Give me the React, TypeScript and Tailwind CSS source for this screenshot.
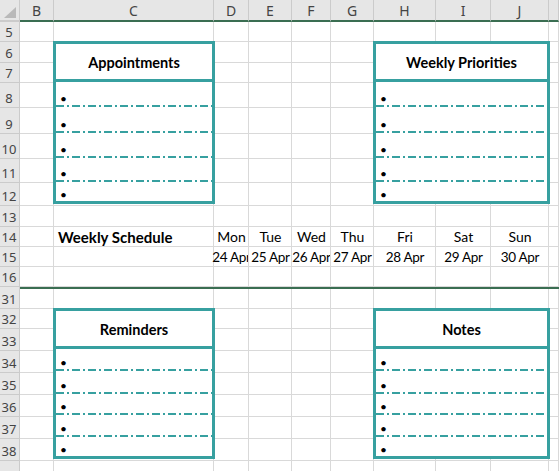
import React from "react";

const colsTpl =
  "grid-cols-[20px_34px_160px_35px_43px_39px_43px_62px_55px_58px_10px]";
const rowsTpl =
  "grid-rows-[22px_20px_21px_20px_25px_26px_25px_24px_23px_21px_20px_20px_20px_2px_20px_20px_22px_22px_22px_22px_22px_22px_22px]";

const letters = ["B", "C", "D", "E", "F", "G", "H", "I", "J", ""];
const topRows = [5, 6, 7, 8, 9, 10, 11, 12, 13, 14, 15, 16];
const bottomRows = [31, 32, 33, 34, 35, 36, 37, 38];

const dash =
  "h-[2px] bg-[repeating-linear-gradient(90deg,#37a0a0_0_8px,transparent_8px_11px,#37a0a0_11px_13px,transparent_13px_16px)]";

const RowHead = ({ n }: { n?: number }) => (
  <div className="bg-[#e6e6e6] border-r border-b border-[#cbcbcb] flex items-end justify-center pr-[1px] text-[13px] leading-[18px] text-[#444] [font-family:'Noto_Sans',sans-serif]">
    {n}
  </div>
);

const Cells = () => (
  <>
    {letters.map((_, i) => (
      <div key={i} className="border-r border-b border-[#d9d9d9]" />
    ))}
  </>
);

const Box = ({ title, items }: { title: string; items: string[] }) => (
  <div className="-m-px flex flex-col border-[3px] border-[#37a0a0] bg-white">
    <div className="h-[38px] shrink-0 flex items-center justify-center pt-[2px] border-b-[3px] border-[#37a0a0] font-bold text-[14.5px] text-black">
      {title}
    </div>
    {items.map((h, i) => (
      <React.Fragment key={i}>
        <div className={`${h} shrink-0 flex items-end pl-[4px] text-[12px] leading-[12px] text-black`}>
          •
        </div>
        {i < items.length - 1 && <div className={dash} />}
      </React.Fragment>
    ))}
  </div>
);

const topItems = ["h-[23px]", "h-[24px]", "h-[23px]", "h-[22px]", "h-[19px]"];
const bottomItems = ["h-[20px]", "h-[21px]", "h-[19px]", "h-[20px]", "h-[19px]"];

const day = "flex items-end justify-center pb-[1px] text-[14px] leading-[18px]";
const date =
  "flex items-end justify-center pb-[1px] text-[13.5px] tracking-[-0.3px] leading-[18px] whitespace-nowrap [clip-path:inset(0_1px_0_-20px)]";

export default function App() {
  return (
    <div className="w-[559px] h-[471px] overflow-hidden bg-white [font-family:Lato,sans-serif]">
      <div className="grid">
        {/* sheet background: headers + gridlines */}
        <div className={`col-start-1 row-start-1 grid ${colsTpl} ${rowsTpl}`}>
          <div className="bg-[#e6e6e6] border-r border-b-2 border-r-[#cbcbcb] border-b-[#cbcbcb] flex items-end justify-end pr-[3px] pb-[2px]">
            <svg width="12" height="11" viewBox="0 0 12 11">
              <polygon points="12,0 12,11 0,11" fill="#b9b9b9" />
            </svg>
          </div>
          {letters.map((l, i) => (
            <div
              key={i}
              className="bg-[#e6e6e6] border-r border-r-[#cbcbcb] border-b-2 border-b-[#3a6e52] flex items-center justify-center text-[14px] text-[#444] [font-family:'Noto_Sans',sans-serif]"
            >
              {l}
            </div>
          ))}
          {topRows.map((n) => (
            <React.Fragment key={n}>
              <RowHead n={n} />
              <Cells />
            </React.Fragment>
          ))}
          <div className="bg-[#e6e6e6] border-r border-[#cbcbcb]" />
          <div className="col-span-10 bg-[#3a6e52]" />
          {bottomRows.map((n) => (
            <React.Fragment key={n}>
              <RowHead n={n} />
              <Cells />
            </React.Fragment>
          ))}
          <RowHead />
          <Cells />
        </div>

        {/* sheet content */}
        <div className={`col-start-1 row-start-1 grid ${colsTpl} ${rowsTpl}`}>
          <div className="col-start-3 row-start-3 row-end-10 flex flex-col">
            <Box title="Appointments" items={topItems} />
          </div>
          <div className="col-start-8 col-end-11 row-start-3 row-end-10 flex flex-col">
            <Box title="Weekly Priorities" items={topItems} />
          </div>

          <div className="col-start-3 row-start-11 flex items-end pl-[4px] pb-[1px] font-bold text-[15px] leading-[18px] text-black">
            Weekly Schedule
          </div>
          <div className={`col-start-4 row-start-11 ${day}`}>Mon</div>
          <div className={`col-start-5 row-start-11 ${day}`}>Tue</div>
          <div className={`col-start-6 row-start-11 ${day}`}>Wed</div>
          <div className={`col-start-7 row-start-11 ${day}`}>Thu</div>
          <div className={`col-start-8 row-start-11 ${day}`}>Fri</div>
          <div className={`col-start-9 row-start-11 ${day}`}>Sat</div>
          <div className={`col-start-10 row-start-11 ${day}`}>Sun</div>

          <div className={`col-start-4 row-start-12 ${date}`}>24 Apr</div>
          <div className={`col-start-5 row-start-12 ${date}`}>25 Apr</div>
          <div className={`col-start-6 row-start-12 ${date}`}>26 Apr</div>
          <div className={`col-start-7 row-start-12 ${date}`}>27 Apr</div>
          <div className={`col-start-8 row-start-12 ${date}`}>28 Apr</div>
          <div className={`col-start-9 row-start-12 ${date}`}>29 Apr</div>
          <div className={`col-start-10 row-start-12 ${date}`}>30 Apr</div>

          <div className="col-start-3 row-start-16 row-end-23 flex flex-col">
            <Box title="Reminders" items={bottomItems} />
          </div>
          <div className="col-start-8 col-end-11 row-start-16 row-end-23 flex flex-col">
            <Box title="Notes" items={bottomItems} />
          </div>
        </div>
      </div>
    </div>
  );
}
